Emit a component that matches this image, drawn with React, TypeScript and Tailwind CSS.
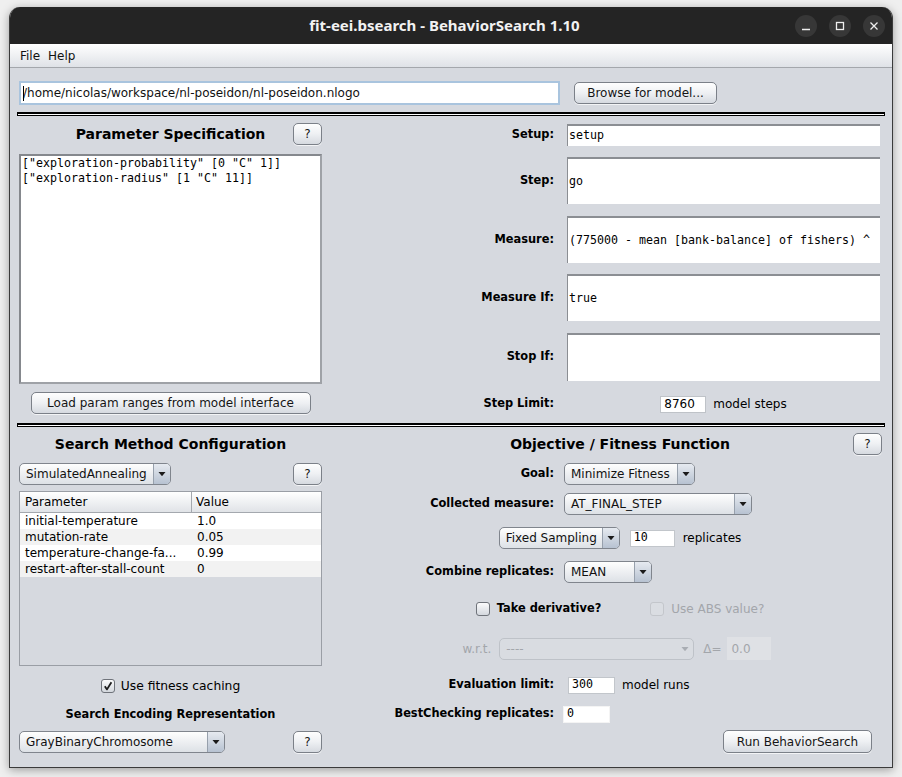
import React from "react";

const SANS = "font-['DejaVu_Sans',sans-serif]";
const MONO = "font-['DejaVu_Sans_Mono',monospace] text-[11.63px]";
const LBL = "text-[11.4px] font-bold";

function Btn({ children, className = "" }: { children: React.ReactNode; className?: string }) {
  return (
    <div
      className={
        "flex items-center justify-center rounded-[5px] border border-[#7b8088] bg-linear-to-b from-[#fefefe] via-[#eef0f3] to-[#d6dae0] text-[12px] text-[#151515] shadow-[0_1px_0_rgba(255,255,255,0.7)] " +
        className
      }
    >
      {children}
    </div>
  );
}

function Arrow({ disabled = false }: { disabled?: boolean }) {
  return (
    <svg width="8" height="6" viewBox="0 0 8 6">
      <path d="M0.5 1 L7.5 1 L4 5.2 Z" fill={disabled ? "#a9adb3" : "#1b1b1b"} />
    </svg>
  );
}

function Combo({ text, className = "" }: { text: string; className?: string }) {
  return (
    <div
      className={
        "flex h-[22px] overflow-hidden rounded-[5px] border border-[#80858d] bg-linear-to-b from-[#fefefe] to-[#dde1e6] " +
        className
      }
    >
      <div className="flex flex-1 items-center pl-[6px] text-[12px] text-[#111]">{text}</div>
      <div className="flex w-[17px] items-center justify-center border-l border-[#97a0ac] bg-linear-to-b from-[#e6eaf0] to-[#b7c2d1]">
        <Arrow />
      </div>
    </div>
  );
}

function Check({ checked = false, disabled = false }: { checked?: boolean; disabled?: boolean }) {
  return (
    <div
      className={
        disabled
          ? "flex h-[14px] w-[14px] items-center justify-center rounded-[3px] border border-[#c3c6cb] bg-[#dadde2]"
          : "flex h-[14px] w-[14px] items-center justify-center rounded-[3px] border border-[#6f737a] bg-linear-to-b from-[#fbfbfc] to-[#d4d8de]"
      }
    >
      {checked && (
        <svg width="10" height="10" viewBox="0 0 10 10">
          <path d="M1.8 5.2 L4 8.4 L8.4 1.2" fill="none" stroke="#1e1e1e" strokeWidth="1.8" strokeLinejoin="round" />
        </svg>
      )}
    </div>
  );
}

function Sep() {
  return <div className="ml-[-2px] h-[4px] w-[868px] border-x border-t-2 border-b border-black bg-white" />;
}

function FieldRow({ label, value, h, mt }: { label: string; value: string; h: string; mt: string }) {
  return (
    <div className={"flex items-center " + mt + " " + h}>
      <div className={"w-[224px] text-right text-black " + LBL}>{label}</div>
      <div className={"ml-[13px] flex w-[313px] items-center border-l border-t-2 border-[#8b8e93] bg-white pl-[1px] text-black " + h + " " + MONO}>
        {value}
      </div>
    </div>
  );
}

export default function App() {
  const rows = [
    ["initial-temperature", "1.0", "bg-white"],
    ["mutation-rate", "0.05", "bg-[#f2f2f2]"],
    ["temperature-change-fa...", "0.99", "bg-white"],
    ["restart-after-stall-count", "0", "bg-[#f2f2f2]"],
  ];
  return (
    <div className={"h-[777px] w-[902px] bg-[#efefef] pl-[9px] pt-[7px] " + SANS}>
      <div className="flex h-[761px] w-[884px] flex-col overflow-hidden rounded-t-[11px] border-x border-b border-[#3b3b3b] shadow-[0_2px_10px_rgba(0,0,0,0.35)]">
        {/* Title bar */}
        <div className="grid h-[37px] shrink-0 grid-cols-[1fr_auto_1fr] items-center bg-[#242424]">
          <div />
          <div className="pr-[13px] font-['Noto_Sans',sans-serif] text-[15px] font-bold text-[#f2f2f2]">
            fit-eei.bsearch - BehaviorSearch 1.10
          </div>
          <div className="flex justify-end gap-[12px] pr-[7px]">
            <div className="flex h-[22px] w-[22px] items-center justify-center rounded-full bg-[#373737]">
              <svg width="10" height="10" viewBox="0 0 10 10">
                <path d="M1 8.5 H9" stroke="#eeeeee" strokeWidth="1.3" />
              </svg>
            </div>
            <div className="flex h-[22px] w-[22px] items-center justify-center rounded-full bg-[#373737]">
              <svg width="10" height="10" viewBox="0 0 10 10">
                <rect x="1.5" y="1.5" width="7" height="7" fill="none" stroke="#eeeeee" strokeWidth="1.3" />
              </svg>
            </div>
            <div className="flex h-[22px] w-[22px] items-center justify-center rounded-full bg-[#373737]">
              <svg width="10" height="10" viewBox="0 0 10 10">
                <path d="M1.5 1.5 L8.5 8.5 M8.5 1.5 L1.5 8.5" stroke="#eeeeee" strokeWidth="1.3" />
              </svg>
            </div>
          </div>
        </div>

        {/* Menu bar */}
        <div className="flex h-[24px] shrink-0 items-center gap-[8px] border-b border-[#a4a7ac] bg-linear-to-b from-white to-[#dfe2e7] pl-[10px] text-[12px] text-[#111]">
          <span>File</span>
          <span>Help</span>
        </div>

        {/* Content */}
        <div className="flex flex-1 flex-col bg-[#d6d9df] pl-[9px] text-black">
          <div className="mt-[13px] flex h-[24px]">
            <div className="relative flex h-[24px] w-[541px] items-center border-2 border-[#a9c4de] bg-white pl-[2px] text-[12px] text-[#111]">
              <span className="absolute left-[2px] top-[3px] h-[15px] w-[1px] bg-black" />
              /home/nicolas/workspace/nl-poseidon/nl-poseidon.nlogo
            </div>
            <Btn className="ml-[14px] mt-[1px] h-[22px] w-[143px]">Browse for model...</Btn>
          </div>

          <div className="mt-[7px]">
            <Sep />
          </div>

          {/* Top section */}
          <div className="flex h-[307px]">
            <div className="flex w-[303px] flex-col">
              <div className="mt-[7px] grid h-[22px] grid-cols-[29px_1fr_29px]">
                <div />
                <div className="text-center text-[14px] font-bold leading-[22px]">Parameter Specification</div>
                <Btn className="h-[22px]">?</Btn>
              </div>
              <div className={"mt-[9px] h-[230px] border-2 border-[#9fa2a7] border-t-[#85888d] border-l-[#85888d] bg-white pl-[1px] leading-[15px] text-black " + MONO}>
                <div>["exploration-probability" [0 "C" 1]]</div>
                <div>["exploration-radius" [1 "C" 11]]</div>
              </div>
              <Btn className="mt-[8px] h-[22px] w-[280px] self-center text-[12.3px]">Load param ranges from model interface</Btn>
            </div>

            <div className="ml-[8px] flex w-[550px] flex-col">
              <FieldRow label="Setup:" value="setup" h="h-[22px]" mt="mt-[8px]" />
              <FieldRow label="Step:" value="go" h="h-[47px]" mt="mt-[11px]" />
              <FieldRow label="Measure:" value="(775000 - mean [bank-balance] of fishers) ^" h="h-[47px]" mt="mt-[12px]" />
              <FieldRow label="Measure If:" value="true" h="h-[47px]" mt="mt-[11px]" />
              <FieldRow label="Stop If:" value="" h="h-[48px]" mt="mt-[12px]" />
              <div className="mt-[15px] flex h-[16px] items-center">
                <div className={"w-[224px] text-right " + LBL}>Step Limit:</div>
                <div className="ml-[13px] flex w-[313px] items-center justify-center">
                  <div className="flex h-[17px] w-[46px] items-center border border-[#bfc3c8] bg-white pl-[3px] text-[12px]">8760</div>
                  <span className="ml-[7px] text-[12px]">model steps</span>
                </div>
              </div>
            </div>
          </div>

          <Sep />

          {/* Bottom section */}
          <div className="flex flex-1">
            <div className="flex w-[303px] flex-col">
              <div className="mt-[6px] h-[22px] text-center text-[14px] font-bold leading-[22px]">Search Method Configuration</div>
              <div className="mt-[8px] flex h-[22px] justify-between">
                <Combo text="SimulatedAnnealing" className="w-[152px]" />
                <Btn className="h-[22px] w-[29px]">?</Btn>
              </div>
              <div className="mt-[6px] flex h-[175px] flex-col border border-[#9a9ea5] bg-[#d6d9df] text-[12px]">
                <div className="flex h-[21px] shrink-0 border-b border-[#a4a8ae] bg-linear-to-b from-white to-[#e0e3e7]">
                  <div className="flex w-[172px] items-center border-r border-[#a4a8ae] pl-[5px]">Parameter</div>
                  <div className="flex flex-1 items-center pl-[4px]">Value</div>
                </div>
                {rows.map(([a, b, bg]) => (
                  <div key={a} className={"flex h-[16px] shrink-0 items-center " + bg}>
                    <div className="w-[172px] pl-[5px]">{a}</div>
                    <div className="pl-[5px]">{b}</div>
                  </div>
                ))}
              </div>
              <div className="mt-[11px] flex h-[18px] items-center justify-center">
                <Check checked />
                <span className="ml-[6px] text-[12.3px]">Use fitness caching</span>
              </div>
              <div className={"mt-[10px] h-[18px] text-center leading-[18px] " + LBL}>Search Encoding Representation</div>
              <div className="mt-[8px] flex h-[22px] justify-between">
                <Combo text="GrayBinaryChromosome" className="w-[206px]" />
                <Btn className="h-[22px] w-[29px]">?</Btn>
              </div>
            </div>

            <div className="ml-[36px] flex w-[524px] flex-col text-[12px]">
              <div className="mt-[6px] grid h-[22px] grid-cols-[29px_1fr_29px]">
                <div />
                <div className="text-center text-[14px] font-bold leading-[22px]">Objective / Fitness Function</div>
                <Btn className="h-[22px]">?</Btn>
              </div>
              <div className="mt-[8px] flex h-[22px] items-center">
                <div className={"w-[196px] text-right " + LBL}>Goal:</div>
                <Combo text="Minimize Fitness" className="ml-[10px] w-[131px]" />
              </div>
              <div className="mt-[8px] flex h-[22px] items-center">
                <div className={"w-[196px] text-right " + LBL}>Collected measure:</div>
                <Combo text="AT_FINAL_STEP" className="ml-[10px] w-[188px]" />
              </div>
              <div className="mt-[12px] flex h-[22px] items-center justify-center">
                <Combo text="Fixed Sampling" className="w-[121px]" />
                <div className={"ml-[10px] flex h-[17px] w-[45px] items-center border border-[#c2c6cb] bg-white pl-[3px] " + MONO}>10</div>
                <span className="ml-[8px]">replicates</span>
              </div>
              <div className="mt-[12px] flex h-[22px] items-center">
                <div className={"w-[196px] text-right " + LBL}>Combine replicates:</div>
                <Combo text="MEAN" className="ml-[10px] w-[88px]" />
              </div>
              <div className="mt-[17px] flex h-[18px] items-center justify-center">
                <Check />
                <span className={"ml-[7px] " + LBL}>Take derivative?</span>
                <div className="ml-[49px]">
                  <Check disabled />
                </div>
                <span className="ml-[7px] text-[#a3a6ab]">Use ABS value?</span>
              </div>
              <div className="mt-[19px] flex h-[23px] items-center justify-center pr-[6px]">
                <span className="text-[#a3a6ab]">w.r.t.</span>
                <div className="ml-[8px] flex h-[22px] w-[195px] overflow-hidden rounded-[5px] border border-[#bec2c8] bg-[#d9dce1]">
                  <div className="flex flex-1 items-center pl-[6px] text-[#a3a6ab]">----</div>
                  <div className="flex w-[17px] items-center justify-center">
                    <Arrow disabled />
                  </div>
                </div>
                <span className="ml-[9px] text-[#a3a6ab]">Δ=</span>
                <div className="ml-[6px] flex h-[23px] w-[44px] items-center bg-[#dfe1e5] pl-[4px] text-[#a3a6ab]">0.0</div>
              </div>
              <div className="mt-[17px] flex h-[16px] items-center">
                <div className={"w-[196px] text-right " + LBL}>Evaluation limit:</div>
                <div className={"ml-[14px] flex h-[17px] w-[47px] items-center border border-[#c2c6cb] bg-white pl-[3px] " + MONO}>300</div>
                <span className="ml-[7px]">model runs</span>
              </div>
              <div className="mt-[13px] flex h-[16px] items-center">
                <div className={"w-[196px] text-right " + LBL}>BestChecking replicates:</div>
                <div className={"ml-[9px] flex h-[17px] w-[47px] items-center border border-[#f4f4f4] bg-white pl-[3px] " + MONO}>0</div>
              </div>
              <div className="mt-[8px] flex h-[23px] justify-end pr-[10px]">
                <Btn className="h-[23px] w-[149px]">Run BehaviorSearch</Btn>
              </div>
            </div>
          </div>
        </div>
      </div>
    </div>
  );
}
